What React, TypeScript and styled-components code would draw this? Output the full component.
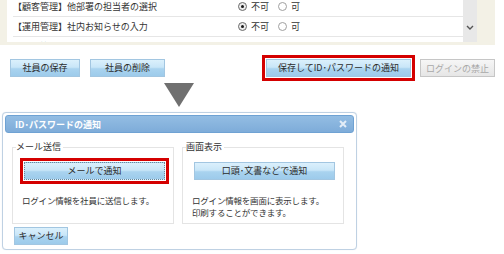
import styled, { createGlobalStyle, css } from "styled-components";

const GlobalStyle = createGlobalStyle`
  body {
    margin: 0;
    background: #ffffff;
    font-family: "Noto Sans CJK JP", "Liberation Sans", sans-serif;
    font-size: 9px;
    color: #333333;
  }
`;

const Page = styled.div`
  width: 504px;
  height: 254px;
  overflow: hidden;
`;

const ListPanel = styled.div`
  width: 495px;
  height: 45px;
  box-sizing: border-box;
  padding: 0 18px 3px 7px;
  background: #f3f1e6;
`;

const ListBox = styled.div`
  display: flex;
  height: 42px;
  background: #ffffff;
  overflow: hidden;
`;

const Rows = styled.div`
  flex: 1;
  margin-top: -3px;
  padding-left: 6px;
`;

const Row = styled.div`
  display: grid;
  grid-template-columns: 225px auto;
  align-items: center;
  height: 19px;
  border-bottom: 1px solid #e6e6e6;
  line-height: 12px;
`;

const Choices = styled.div`
  display: flex;
  align-items: center;
  gap: 4px;
`;

const Radio = styled.span<{ $checked?: boolean }>`
  position: relative;
  display: inline-block;
  width: 9px;
  height: 9px;
  box-sizing: border-box;
  border-radius: 50%;
  border: 1px solid ${(p) => (p.$checked ? "#6a6a6a" : "#a0a0a0")};
  background: ${(p) => (p.$checked ? "#ececec" : "#ffffff")};
  ${(p) =>
    p.$checked &&
    css`
      &::after {
        content: "";
        position: absolute;
        left: 2px;
        top: 2px;
        width: 3px;
        height: 3px;
        border-radius: 50%;
        background: #1a1a1a;
      }
    `}
`;

const ChoiceLabel = styled.span`
  margin-right: 5px;
`;

const ScrollBar = styled.div`
  width: 14px;
  background: #e8e8e8;
  display: flex;
  justify-content: center;
  padding-top: 25px;
  box-sizing: border-box;
`;

const ActionBar = styled.div`
  width: 495px;
  box-sizing: border-box;
  display: flex;
  justify-content: space-between;
  align-items: center;
  padding: 14px 0 0 10px;
`;

const Group = styled.div<{ $gap: number }>`
  display: flex;
  align-items: center;
  gap: ${(p) => p.$gap}px;
`;

const BlueButton = styled.button<{ $width?: number; $marked?: boolean; $focused?: boolean }>`
  width: ${(p) => (p.$width ? `${p.$width}px` : "100%")};
  height: 18px;
  padding: 0;
  border: 1px solid #a2c6e1;
  background: linear-gradient(
    to bottom,
    #dbf0fc 0%,
    #c9e6f8 45%,
    #a9d3ef 55%,
    #9dcbeb 100%
  );
  font-family: inherit;
  font-size: 9px;
  color: #2c2c2c;
  line-height: 14px;
  white-space: nowrap;
  cursor: pointer;
  ${(p) =>
    p.$marked &&
    css`
      outline: 3px solid #d40000;
      outline-offset: 1px;
    `}
  ${(p) =>
    p.$focused &&
    css`
      border-style: dotted;
      border-color: #6d8799;
    `}
`;

const GrayButton = styled.button`
  width: 75px;
  height: 18px;
  padding: 0;
  border: 1px solid #c6c6c6;
  background: linear-gradient(to bottom, #f6f6f6, #e6e6e6);
  font-family: inherit;
  font-size: 9px;
  color: #a8a8a8;
  white-space: nowrap;
`;

const ArrowRow = styled.div`
  padding: 6px 0 0 164px;
`;

const Triangle = styled.div`
  width: 0;
  height: 0;
  border-left: 15px solid transparent;
  border-right: 15px solid transparent;
  border-top: 24px solid #707070;
`;

const Dialog = styled.div`
  margin: 5px 0 0 2px;
  width: 355px;
  box-sizing: border-box;
  border: 1px solid #bfd1e3;
  border-radius: 4px;
  padding: 2px;
  background: #ffffff;
  box-shadow: 0 0 1px #d8e2ec;
`;

const DialogHeader = styled.div`
  display: flex;
  align-items: center;
  justify-content: space-between;
  height: 18px;
  box-sizing: border-box;
  padding: 0 6px 0 9px;
  border: 1px solid #6fa2d3;
  border-radius: 3px;
  background: linear-gradient(to bottom, #93bde3, #7eacd9);
  color: #ffffff;
  font-weight: bold;
  font-size: 9px;
`;

const DialogBody = styled.div`
  padding: 8px 10px 2px 7px;
`;

const Sections = styled.div`
  display: grid;
  grid-template-columns: 1fr 1fr;
  gap: 8px;
`;

const Section = styled.fieldset`
  margin: 0;
  padding: 0 8px 5px 11px;
  border: 1px solid #e4e4e4;
  min-width: 0;
`;

const Legend = styled.legend`
  padding: 0 2px 0 0;
  margin-left: -8px;
  line-height: 12px;
  color: #333333;
`;

const SectionAction = styled.div`
  margin-top: 9px;
`;

const Desc = styled.p`
  margin: 14px 0 0 -2px;
  font-size: 8.5px;
  letter-spacing: -0.2px;
  line-height: 12px;
  white-space: nowrap;
  color: #333333;
`;

const Footer = styled.div`
  margin: 3px 0 0 2px;
`;

const rows = [
  "【顧客管理】他部署の担当者の選択",
  "【運用管理】社内お知らせの入力",
  "【運用管理】社員に関するログの確認",
];

export default function App() {
  return (
    <Page>
      <GlobalStyle />
      <ListPanel>
        <ListBox>
          <Rows>
            {rows.map((label) => (
              <Row key={label}>
                <span>{label}</span>
                <Choices>
                  <Radio $checked />
                  <ChoiceLabel>不可</ChoiceLabel>
                  <Radio />
                  <ChoiceLabel>可</ChoiceLabel>
                </Choices>
              </Row>
            ))}
          </Rows>
          <ScrollBar>
            <svg width="8" height="5" viewBox="0 0 8 5">
              <path d="M1 1 L4 4 L7 1" fill="none" stroke="#555" strokeWidth="1.4" />
            </svg>
          </ScrollBar>
        </ListBox>
      </ListPanel>

      <ActionBar>
        <Group $gap={10}>
          <BlueButton $width={70}>社員の保存</BlueButton>
          <BlueButton $width={75}>社員の削除</BlueButton>
        </Group>
        <Group $gap={9}>
          <BlueButton $width={145} $marked>
            保存してID･パスワードの通知
          </BlueButton>
          <GrayButton disabled>ログインの禁止</GrayButton>
        </Group>
      </ActionBar>

      <ArrowRow>
        <Triangle />
      </ArrowRow>

      <Dialog>
        <DialogHeader>
          <span>ID･パスワードの通知</span>
          <svg width="8" height="8" viewBox="0 0 8 8">
            <path d="M1 1 L7 7 M7 1 L1 7" stroke="#e3edf7" strokeWidth="2" />
          </svg>
        </DialogHeader>
        <DialogBody>
          <Sections>
            <Section>
              <Legend>メール送信</Legend>
              <SectionAction>
                <BlueButton $marked $focused>
                  メールで通知
                </BlueButton>
              </SectionAction>
              <Desc>ログイン情報を社員に送信します。</Desc>
            </Section>
            <Section>
              <Legend>画面表示</Legend>
              <SectionAction>
                <BlueButton>口頭･文書などで通知</BlueButton>
              </SectionAction>
              <Desc>
                ログイン情報を画面に表示します。
                <br />
                印刷することができます。
              </Desc>
            </Section>
          </Sections>
          <Footer>
            <BlueButton $width={54}>キャンセル</BlueButton>
          </Footer>
        </DialogBody>
      </Dialog>
    </Page>
  );
}
